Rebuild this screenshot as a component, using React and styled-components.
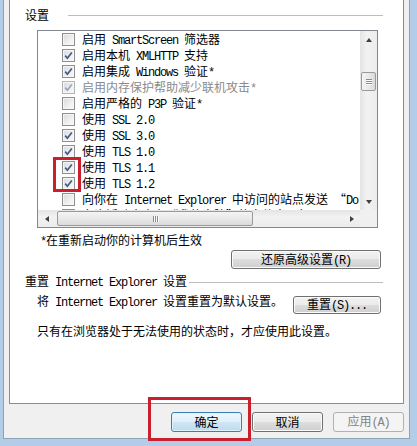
import styled, { createGlobalStyle } from 'styled-components';

const GlobalStyle = createGlobalStyle`
  html, body {
    margin: 0;
    padding: 0;
    background: #f0f0f0;
  }
  body {
    font-family: "Noto Sans CJK SC", "Liberation Sans", sans-serif;
    font-size: 12px;
    color: #000;
  }
`;

const Screen = styled.div`
  position: relative;
  width: 417px;
  height: 446px;
  overflow: hidden;
`;

const Window = styled.div`
  box-sizing: border-box;
  width: 417px;
  height: 446px;
  padding: 0 6px;
  background: #f0f0f0;
  border-left: 3px solid #b3cde8;
  border-right: 7px solid #b3cde8;
  border-bottom: 7px solid #b3cde8;
  box-shadow: inset 1px 0 0 #8da2b8, inset -1px 0 0 #8da2b8, inset 0 -1px 0 #8da2b8;
  display: flex;
  flex-direction: column;
`;

const Panel = styled.div`
  box-sizing: border-box;
  height: 404px;
  background: #fff;
  border: 1px solid #898c95;
  border-top: 0;
  display: flex;
  flex-direction: column;
`;

const SectionHeader = styled.div`
  display: flex;
  align-items: center;
  height: 16px;
  line-height: 16px;
  margin-top: ${p => p.$top}px;
  padding: 0 20px 0 15px;
  white-space: nowrap;
`;

const Rule = styled.div`
  flex: 1;
  height: 1px;
  margin-left: ${p => p.$gap}px;
  background: #bcbcbc;
`;

const ListBox = styled.div`
  box-sizing: border-box;
  width: 341px;
  height: 198px;
  margin: 7px 0 0 27px;
  border: 1px solid #828790;
  display: grid;
  grid-template-columns: 1fr 17px;
  grid-template-rows: 1fr 17px;
`;

const Viewport = styled.div`
  overflow: hidden;
`;

const Row = styled.div`
  display: flex;
  align-items: center;
  gap: 7px;
  height: 16px;
  line-height: 16px;
  padding: 1px 0 0 24px;
  box-sizing: border-box;
  white-space: nowrap;
  color: ${p => (p.$disabled ? '#8a8a8a' : '#000')};
`;

const Box = styled.span`
  box-sizing: border-box;
  flex: none;
  width: 13px;
  height: 13px;
  border: 1px solid ${p => (p.$disabled ? '#b4b4b4' : '#8e8f8f')};
  background: linear-gradient(135deg, #d6d8db 0%, #eff0f1 60%, #fafafa 100%);
  box-shadow: inset 0 0 0 1px #f6f6f6;
  display: flex;
  align-items: center;
  justify-content: center;
`;

const Latin = styled.span`
  font-family: "Liberation Mono", monospace;
  font-size: 12px;
  letter-spacing: -1.2px;
`;

const VScroll = styled.div`
  display: flex;
  flex-direction: column;
  background: linear-gradient(to right, #e4e4e4, #f2f2f2 40%, #ececec);
`;

const HScroll = styled.div`
  display: flex;
  background: linear-gradient(#e4e4e4, #f2f2f2 40%, #ececec);
`;

const Corner = styled.div`
  background: #f0f0f0;
`;

const ArrowCell = styled.div`
  flex: none;
  width: 17px;
  height: 17px;
  display: flex;
  align-items: center;
  justify-content: center;
`;

const Arrow = styled.span`
  width: 0;
  height: 0;
  ${p => p.$dir === 'up' && 'border-left: 3.5px solid transparent; border-right: 3.5px solid transparent; border-bottom: 4px solid #404040;'}
  ${p => p.$dir === 'down' && 'border-left: 3.5px solid transparent; border-right: 3.5px solid transparent; border-top: 4px solid #404040;'}
  ${p => p.$dir === 'left' && 'border-top: 3.5px solid transparent; border-bottom: 3.5px solid transparent; border-right: 4px solid #404040;'}
  ${p => p.$dir === 'right' && 'border-top: 3.5px solid transparent; border-bottom: 3.5px solid transparent; border-left: 4px solid #404040;'}
`;

const Track = styled.div`
  flex: 1;
  display: flex;
  flex-direction: ${p => (p.$vertical ? 'column' : 'row')};
`;

const Thumb = styled.div`
  box-sizing: border-box;
  flex: none;
  border: 1px solid #9a9a9a;
  border-radius: 2px;
  display: flex;
  align-items: center;
  justify-content: center;
  gap: 1px;
  flex-direction: ${p => (p.$vertical ? 'column' : 'row')};
  ${p =>
    p.$vertical
      ? `width: 15px; height: 19px; margin: 24px 1px 0;
         background: linear-gradient(to right, #f4f4f4, #e9e9e9 50%, #dadada);`
      : `width: 196px; height: 15px; margin: 1px 0 0 2px;
         background: linear-gradient(#f4f4f4, #e9e9e9 50%, #dadada);`}
`;

const Grip = styled.span`
  background: #8a8a8a;
  box-shadow: ${p => (p.$vertical ? '0 1px 0 #fff' : '1px 0 0 #fff')};
  ${p => (p.$vertical ? 'width: 6px; height: 1px;' : 'width: 1px; height: 6px;')}
`;

const Note = styled.div`
  margin: 4px 0 0 30px;
  line-height: 16px;
  white-space: nowrap;
`;

const Button = styled.button`
  box-sizing: border-box;
  flex: none;
  width: ${p => p.$w}px;
  height: ${p => p.$h}px;
  padding: 0;
  font-family: inherit;
  font-size: 12px;
  line-height: 1;
  color: #000;
  border: 1px solid #707070;
  border-radius: 3px;
  background: linear-gradient(#f2f2f2 0%, #ebebeb 50%, #dddddd 50%, #cfcfcf 100%);
  box-shadow: inset 0 0 0 1px #fbfbfb;
  white-space: nowrap;

  ${p => p.$primary && `
    border-color: #3c7fb1;
    background: linear-gradient(#eef7fc 0%, #e0eff8 50%, #cfe6f4 50%, #bcdcef 100%);
    box-shadow: inset 0 0 0 1px #dff2fc;
  `}

  ${p => p.disabled && `
    border-color: #adb2b5;
    background: #f4f4f4;
    color: #838383;
    box-shadow: none;
  `}
`;

const RestoreButton = styled(Button)`
  align-self: flex-end;
  margin: 0 22px 0 0;
`;

const ResetRow = styled.div`
  display: flex;
  justify-content: space-between;
  align-items: flex-start;
  margin-top: 3px;
  padding: 0 22px 0 27px;
  line-height: 16px;
  white-space: nowrap;

  & > button {
    margin-top: 3px;
  }
`;

const Paragraph = styled.div`
  margin: 9px 0 0 27px;
  line-height: 16px;
  white-space: nowrap;
`;

const Footer = styled.div`
  display: flex;
  justify-content: flex-end;
  gap: 10px;
  margin-top: 8px;
`;

const Highlight = styled.div`
  position: absolute;
  box-sizing: border-box;
  left: ${p => p.$x}px;
  top: ${p => p.$y}px;
  width: ${p => p.$w}px;
  height: ${p => p.$h}px;
  border: 3px solid #cc1f2d;
  pointer-events: none;
`;

// wrap runs of ASCII in the narrow latin font, like SimSun does
const Mixed = ({ text }) => (
  <span>
    {text.split(/([\x20-\x7e]+)/).map((part, i) =>
      /^[\x20-\x7e]+$/.test(part) ? <Latin key={i}>{part}</Latin> : part
    )}
  </span>
);

const Check = ({ checked, disabled }) => (
  <Box $disabled={disabled}>
    {checked && (
      <svg width="9" height="9" viewBox="0 0 9 9">
        <path
          d="M1.2 4.6 L3.4 7.2 L7.8 1.4"
          fill="none"
          stroke={disabled ? '#9aa4b8' : '#44598a'}
          strokeWidth="1.7"
        />
      </svg>
    )}
  </Box>
);

const options = [
  { text: '启用 SmartScreen 筛选器', checked: false },
  { text: '启用本机 XMLHTTP 支持', checked: true },
  { text: '启用集成 Windows 验证*', checked: true },
  { text: '启用内存保护帮助减少联机攻击*', checked: true, disabled: true },
  { text: '启用严格的 P3P 验证*', checked: false },
  { text: '使用 SSL 2.0', checked: false },
  { text: '使用 SSL 3.0', checked: true },
  { text: '使用 TLS 1.0', checked: true },
  { text: '使用 TLS 1.1', checked: true },
  { text: '使用 TLS 1.2', checked: true },
  { text: '向你在 Internet Explorer 中访问的站点发送 “Do Not Track” 请求*', checked: false },
  { text: '允许活动内容在“我的电脑”的文件中运行*', checked: true },
];

const App = () => (
  <Screen>
    <GlobalStyle />
    <Window>
      <Panel>
        <SectionHeader $top={7}>
          设置
          <Rule $gap={19} />
        </SectionHeader>

        <ListBox>
          <Viewport>
            {options.map((opt, i) => (
              <Row key={i} $disabled={opt.disabled}>
                <Check checked={opt.checked} disabled={opt.disabled} />
                <Mixed text={opt.text} />
              </Row>
            ))}
          </Viewport>
          <VScroll>
            <ArrowCell><Arrow $dir="up" /></ArrowCell>
            <Track $vertical>
              <Thumb $vertical>
                <Grip $vertical />
                <Grip $vertical />
                <Grip $vertical />
              </Thumb>
            </Track>
            <ArrowCell><Arrow $dir="down" /></ArrowCell>
          </VScroll>
          <HScroll>
            <ArrowCell><Arrow $dir="left" /></ArrowCell>
            <Track>
              <Thumb>
                <Grip />
                <Grip />
                <Grip />
              </Thumb>
            </Track>
            <ArrowCell><Arrow $dir="right" /></ArrowCell>
          </HScroll>
          <Corner />
        </ListBox>

        <Note><Mixed text="*在重新启动你的计算机后生效" /></Note>

        <RestoreButton $w={150} $h={19}>
          <Mixed text="还原高级设置(R)" />
        </RestoreButton>

        <SectionHeader $top={5}>
          <Mixed text="重置 Internet Explorer 设置" />
          <Rule $gap={2} />
        </SectionHeader>

        <ResetRow>
          <Mixed text="将 Internet Explorer 设置重置为默认设置。" />
          <Button $w={88} $h={18}>
            <Mixed text="重置(S)..." />
          </Button>
        </ResetRow>

        <Paragraph>只有在浏览器处于无法使用的状态时，才应使用此设置。</Paragraph>
      </Panel>

      <Footer>
        <Button $w={71} $h={20} $primary>确定</Button>
        <Button $w={71} $h={20}>取消</Button>
        <Button $w={71} $h={20} disabled>
          <Mixed text="应用(A)" />
        </Button>
      </Footer>
    </Window>

    <Highlight $x={53} $y={157} $w={28} $h={35} />
    <Highlight $x={148} $y={397} $w={103} $h={44} />
  </Screen>
);

export default App;
